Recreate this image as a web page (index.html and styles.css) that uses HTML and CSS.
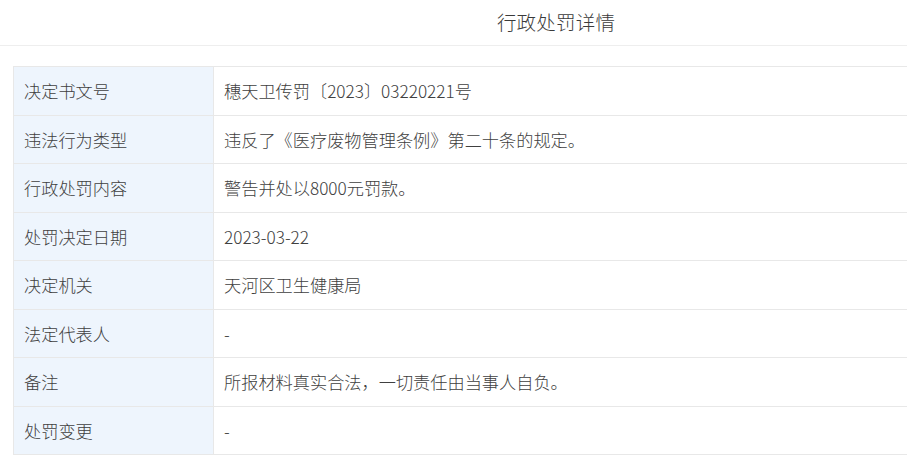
FILE: index.html
```html
<!DOCTYPE html>
<html lang="zh-CN">
<head>
<meta charset="utf-8">
<title>行政处罚详情</title>
<link rel="stylesheet" href="styles.css">
</head>
<body>
<div class="dialog">
  <div class="dialog-header">
    <h1 class="dialog-title">行政处罚详情</h1>
  </div>
  <div class="dialog-body">
    <table class="detail-table">
      <tbody>
        <tr><th>决定书文号</th><td>穗天卫传罚〔2023〕03220221号</td></tr>
        <tr><th>违法行为类型</th><td>违反了《医疗废物管理条例》第二十条的规定。</td></tr>
        <tr><th>行政处罚内容</th><td>警告并处以8000元罚款。</td></tr>
        <tr><th>处罚决定日期</th><td>2023-03-22</td></tr>
        <tr><th>决定机关</th><td>天河区卫生健康局</td></tr>
        <tr><th>法定代表人</th><td>-</td></tr>
        <tr><th>备注</th><td>所报材料真实合法，一切责任由当事人自负。</td></tr>
        <tr><th>处罚变更</th><td>-</td></tr>
      </tbody>
    </table>
  </div>
</div>
</body>
</html>
```
FILE: styles.css
```css
html, body {
  margin: 0;
  padding: 0;
  background: #fff;
  overflow: hidden;
}
body {
  font-family: "Noto Sans CJK SC", "Noto Sans", sans-serif;
  color: #333;
}
.dialog {
  width: 1112px;
}
.dialog-header {
  height: 45px;
  border-bottom: 1px solid #eeeeee;
  display: flex;
  align-items: center;
  justify-content: center;
}
.dialog-title {
  margin: 0;
  font-size: 19.5px;
  font-weight: 300;
  color: #3a3a3a;
  letter-spacing: 0.2px;
  padding-bottom: 2px;
}
.dialog-body {
  padding: 20px 13px 0;
}
.detail-table {
  width: 100%;
  border-collapse: collapse;
  font-size: 17.2px;
}
.detail-table th,
.detail-table td {
  height: 48.5px;
  box-sizing: border-box;
  border: 1px solid #e8e8e8;
  padding: 0 10px;
  text-align: left;
  font-weight: 300;
  vertical-align: middle;
  color: #404040;
}
.detail-table th {
  width: 200px;
  background: #eef5fd;
}
```
